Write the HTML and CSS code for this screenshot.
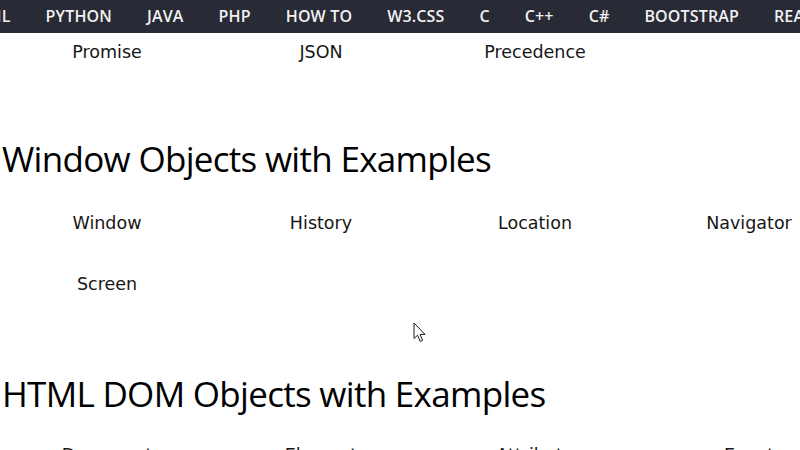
FILE: index.html
```html
<!DOCTYPE html>
<html lang="en">
<head>
<meta charset="utf-8">
<title>JavaScript Reference</title>
<link rel="stylesheet" href="styles.css">
</head>
<body>
<nav class="topnav">
  <div class="topnav-track">
    <a class="topnav-link">HTML</a>
    <a class="topnav-link">PYTHON</a>
    <a class="topnav-link">JAVA</a>
    <a class="topnav-link">PHP</a>
    <a class="topnav-link">HOW TO</a>
    <a class="topnav-link">W3.CSS</a>
    <a class="topnav-link">C</a>
    <a class="topnav-link">C++</a>
    <a class="topnav-link">C#</a>
    <a class="topnav-link">BOOTSTRAP</a>
    <a class="topnav-link">REACT</a>
  </div>
</nav>

<main class="content">
  <div class="ref-grid">
    <a class="ref-item">Promise</a>
    <a class="ref-item">JSON</a>
    <a class="ref-item">Precedence</a>
  </div>

  <h2 class="section-title">Window Objects with Examples</h2>
  <div class="ref-grid">
    <a class="ref-item">Window</a>
    <a class="ref-item">History</a>
    <a class="ref-item">Location</a>
    <a class="ref-item">Navigator</a>
    <a class="ref-item">Screen</a>
  </div>

  <h2 class="section-title section-title-dom">HTML DOM Objects with Examples</h2>
  <div class="ref-grid">
    <a class="ref-item">Document</a>
    <a class="ref-item">Element</a>
    <a class="ref-item">Attribute</a>
    <a class="ref-item">Event</a>
  </div>
</main>

<svg class="pointer" width="14" height="22" viewBox="0 0 14 22" aria-hidden="true">
  <path d="M1 1 L1 16.5 L4.6 13.2 L7.2 19.4 L9.6 18.4 L7.1 12.4 L12 12.4 Z" fill="#ffffff" stroke="#1a1a1a" stroke-width="1" stroke-linejoin="round"/>
</svg>
</body>
</html>
```
FILE: styles.css
```css
html, body {
  margin: 0;
  padding: 0;
  background: #ffffff;
  overflow: hidden;
  width: 800px;
  height: 450px;
}

body {
  position: relative;
  font-family: "DejaVu Sans", Verdana, sans-serif;
  color: #111111;
}

/* top navigation bar, scrolled sideways */
.topnav {
  position: fixed;
  top: 0;
  left: 0;
  right: 0;
  height: 33px;
  background: #282a35;
  z-index: 5;
  overflow: hidden;
}

.topnav-track {
  display: flex;
  align-items: center;
  height: 100%;
  margin-left: -52px;
  white-space: nowrap;
}

.topnav-link {
  color: #f1f1f1;
  font-family: "Open Sans", "Noto Sans", sans-serif;
  font-weight: 600;
  font-size: 16px;
  letter-spacing: 0.15px;
  padding: 0 17.5px;
  line-height: 33px;
}

.content {
  padding-top: 33px;
}

.ref-grid {
  display: grid;
  grid-template-columns: repeat(4, 214px);
  grid-auto-rows: 61px;
  width: 856px;
}

.ref-grid:first-child {
  margin-top: -12px;
}

.ref-item {
  display: flex;
  align-items: center;
  justify-content: center;
  font-size: 17.5px;
  color: #161616;
}

.section-title {
  margin: 53px 0 9px 2px;
  font-family: "Open Sans", "Noto Sans", sans-serif;
  font-weight: 400;
  font-size: 35px;
  letter-spacing: -0.7px;
  line-height: 48px;
  color: #000000;
}

.section-title-dom {
  margin-top: 56px;
  margin-bottom: 6px;
}

.pointer {
  position: absolute;
  left: 413px;
  top: 322px;
}
```
